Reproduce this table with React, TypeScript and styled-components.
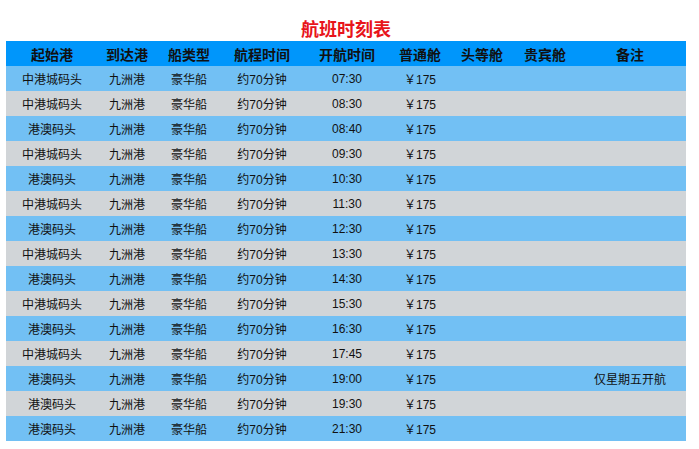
import React from "react";
import styled, { createGlobalStyle } from "styled-components";

const Global = createGlobalStyle`
  html, body { margin: 0; padding: 0; background: #ffffff; }
  body { font-family: "Liberation Sans", "Noto Sans CJK SC", sans-serif; }
`;

const Page = styled.div`
  padding: 19px 0 0 6px;
  width: 680px;
`;

const Title = styled.h1`
  margin: 0;
  height: 22px;
  line-height: 22px;
  text-align: center;
  font-size: 18px;
  font-weight: bold;
  color: #e8141b;
`;

const COLS = "92px 58px 66px 80px 90px 56px 68px 58px 112px";

const Grid = styled.div`
  display: grid;
  grid-template-columns: ${COLS};
`;

const HeadRow = styled(Grid)`
  background: #0096fb;
  height: 25px;
`;

const Row = styled(Grid)<{ $alt: boolean }>`
  background: ${(p) => (p.$alt ? "#d1d5d8" : "#72c0f4")};
  height: 25px;
`;

const HeadCell = styled.div`
  display: flex;
  align-items: center;
  justify-content: center;
  font-size: 14px;
  font-weight: bold;
  color: #111;
`;

const Cell = styled.div`
  display: flex;
  align-items: center;
  justify-content: center;
  font-size: 12px;
  color: #111;
  white-space: nowrap;
`;

const headers = ["起始港", "到达港", "船类型", "航程时间", "开航时间", "普通舱", "头等舱", "贵宾舱", "备注"];

const rows: [string, string, string][] = [
  ["中港城码头", "07:30", ""],
  ["中港城码头", "08:30", ""],
  ["港澳码头", "08:40", ""],
  ["中港城码头", "09:30", ""],
  ["港澳码头", "10:30", ""],
  ["中港城码头", "11:30", ""],
  ["港澳码头", "12:30", ""],
  ["中港城码头", "13:30", ""],
  ["港澳码头", "14:30", ""],
  ["中港城码头", "15:30", ""],
  ["港澳码头", "16:30", ""],
  ["中港城码头", "17:45", ""],
  ["港澳码头", "19:00", "仅星期五开航"],
  ["港澳码头", "19:30", ""],
  ["港澳码头", "21:30", ""],
];

export default function App() {
  return (
    <>
      <Global />
      <Page>
        <Title>航班时刻表</Title>
        <HeadRow>
          {headers.map((h) => (
            <HeadCell key={h}>{h}</HeadCell>
          ))}
        </HeadRow>
        {rows.map(([from, time, note], i) => (
          <Row key={i} $alt={i % 2 === 1}>
            <Cell>{from}</Cell>
            <Cell>九洲港</Cell>
            <Cell>豪华船</Cell>
            <Cell>约70分钟</Cell>
            <Cell>{time}</Cell>
            <Cell>￥175</Cell>
            <Cell />
            <Cell />
            <Cell>{note}</Cell>
          </Row>
        ))}
      </Page>
    </>
  );
}
